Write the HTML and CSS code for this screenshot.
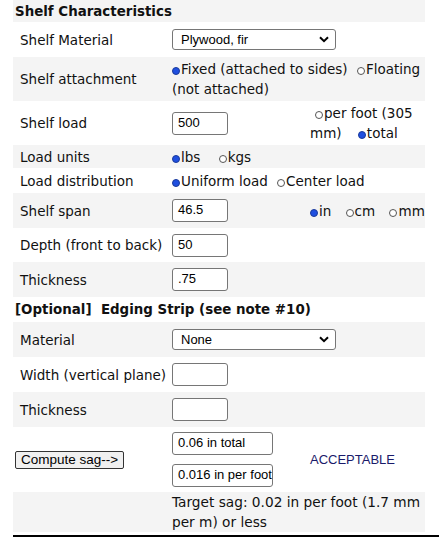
FILE: index.html
```html
<!DOCTYPE html>
<html>
<head>
<meta charset="utf-8">
<link rel="stylesheet" href="styles.css">
</head>
<body>
<div class="page">
<table class="calc">
  <colgroup><col class="k1"><col class="k2"><col class="k3"></colgroup>
  <tr class="h22"><th colspan="3" class="head">Shelf Characteristics</th></tr>
  <tr class="h35"><td class="lab">Shelf Material</td>
    <td colspan="2" class="fld"><div class="sel"><span>Plywood, fir</span><svg class="chev" viewBox="0 0 10 7" width="10" height="7"><path d="M1 1.2 L5 5.2 L9 1.2" fill="none" stroke="#000" stroke-width="2"/></svg></div></td></tr>
  <tr class="h44"><td class="lab">Shelf attachment</td>
    <td colspan="2" class="fld txt"><span class="rad on"></span>Fixed (attached to sides) <span class="rad m5"></span>Floating (not attached)</td></tr>
  <tr class="h44"><td class="lab">Shelf load</td>
    <td class="fld"><div class="inp w56">500</div></td>
    <td class="c3 txt"><span class="rad m5"></span>per foot (305 mm) <span class="rad on m12"></span>total</td></tr>
  <tr class="h23"><td class="lab">Load units</td>
    <td colspan="2" class="fld txt"><span class="rad on"></span>lbs <span class="rad m14"></span>kgs</td></tr>
  <tr class="h25"><td class="lab">Load distribution</td>
    <td colspan="2" class="fld txt"><span class="rad on"></span>Uniform load <span class="rad m5"></span>Center load</td></tr>
  <tr class="h35"><td class="lab">Shelf span</td>
    <td class="fld"><div class="inp w56">46.5</div></td>
    <td class="c3 txt nw"><span class="rad on"></span>in <span class="rad m10"></span>cm <span class="rad m10"></span>mm</td></tr>
  <tr class="h34"><td class="lab">Depth (front to back)</td>
    <td class="fld"><div class="inp w56">50</div></td><td class="c3"></td></tr>
  <tr class="h35"><td class="lab">Thickness</td>
    <td class="fld"><div class="inp w56">.75</div></td><td class="c3"></td></tr>
  <tr class="h25"><th colspan="3" class="head">[Optional]&nbsp; Edging Strip (see note #10)</th></tr>
  <tr class="h35"><td class="lab">Material</td>
    <td colspan="2" class="fld"><div class="sel"><span>None</span><svg class="chev" viewBox="0 0 10 7" width="10" height="7"><path d="M1 1.2 L5 5.2 L9 1.2" fill="none" stroke="#000" stroke-width="2"/></svg></div></td></tr>
  <tr class="h35"><td class="lab">Width (vertical plane)</td>
    <td class="fld"><div class="inp w56"></div></td><td class="c3"></td></tr>
  <tr class="h35"><td class="lab">Thickness</td>
    <td class="fld"><div class="inp w56"></div></td><td class="c3"></td></tr>
  <tr class="h65"><td class="btncell"><span class="btn">Compute sag--&gt;</span></td>
    <td class="fld"><div class="stack"><div class="inp w100">0.06 in total</div><div class="inp w100">0.016 in per foot</div></div></td>
    <td class="c3 ok">ACCEPTABLE</td></tr>
  <tr class="h40"><td></td>
    <td colspan="2" class="fld txt wide">Target sag: 0.02 in per foot (1.7 mm per m) or less</td></tr>
</table>
<div class="rule"></div>
</div>
</body>
</html>
```

FILE: styles.css
```css
html, body { margin: 0; padding: 0; background: #fff; }
.page { padding-left: 13px; }
.calc {
  border-collapse: collapse;
  width: 412px;
  font-family: "DejaVu Sans", Verdana, sans-serif;
  font-size: 13.5px;
  color: #111;
  table-layout: fixed;
}
.k1 { width: 157px; }
.k2 { width: 113px; }
.k3 { width: 142px; }
.calc tr:nth-child(odd) { background: #f4f4f4; }
.calc tr:nth-child(even) { background: #fff; }
.calc td, .calc th { padding: 0; vertical-align: middle; }
.head { text-align: left; font-weight: bold; padding-left: 2px !important; font-size: 13.4px; }
.lab { padding-left: 7px !important; white-space: nowrap; }
.fld { padding-left: 2px !important; }
.c3 { text-align: left; padding-left: 27px !important; }
.nw { white-space: nowrap; }
.txt { line-height: 20px; }
.wide { font-size: 13.7px; }
.h22 { height: 22px; } .h23 { height: 23px; } .h25 { height: 25px; }
.h34 { height: 34px; } .h35 { height: 35px; } .h40 { height: 40px; }
.h44 { height: 44px; } .h65 { height: 65px; }
.sel {
  box-sizing: border-box; width: 164px; height: 21px;
  border: 1px solid #767676; border-radius: 3px; background: #fff;
  display: flex; align-items: center; justify-content: space-between;
  padding: 0 6px 0 8px;
  font-family: "Liberation Sans", Arial, sans-serif; font-size: 13px; color: #000;
}
.inp {
  box-sizing: border-box; height: 23px;
  border: 1px solid #767676; border-radius: 3px; background: #fff;
  padding: 0 5px; line-height: 20px; overflow: hidden; white-space: nowrap;
  font-family: "Liberation Sans", Arial, sans-serif; font-size: 13px; color: #000;
}
.w56 { width: 56px; }
.w100 { width: 101px; }
.stack { display: flex; flex-direction: column; gap: 9px; }
.rad {
  display: inline-block; box-sizing: border-box; width: 8px; height: 8px;
  border: 1px solid #555; border-radius: 50%; background: #fff;
  vertical-align: -1px; margin-right: 1px;
}
.rad.on { background: #1f4fe0; border-color: #1a3a9a; }
.m5 { margin-left: 5px; }
.m10 { margin-left: 10px; }
.m12 { margin-left: 12px; }
.m14 { margin-left: 14px; }
.btncell { padding-left: 2px !important; }
.btn {
  display: inline-block; box-sizing: border-box; height: 18px; padding: 0 5px;
  border: 1px solid #333; border-radius: 2px; background: #f0f0f0;
  font-family: "Liberation Sans", Arial, sans-serif; font-size: 13.5px; line-height: 16px; color: #000;
}
.ok { font-family: "Liberation Sans", Arial, sans-serif; font-size: 13px; color: #1a1a6a; }
.rule { margin-top: 3px; height: 2px; background: #000; width: 440px; }
```
